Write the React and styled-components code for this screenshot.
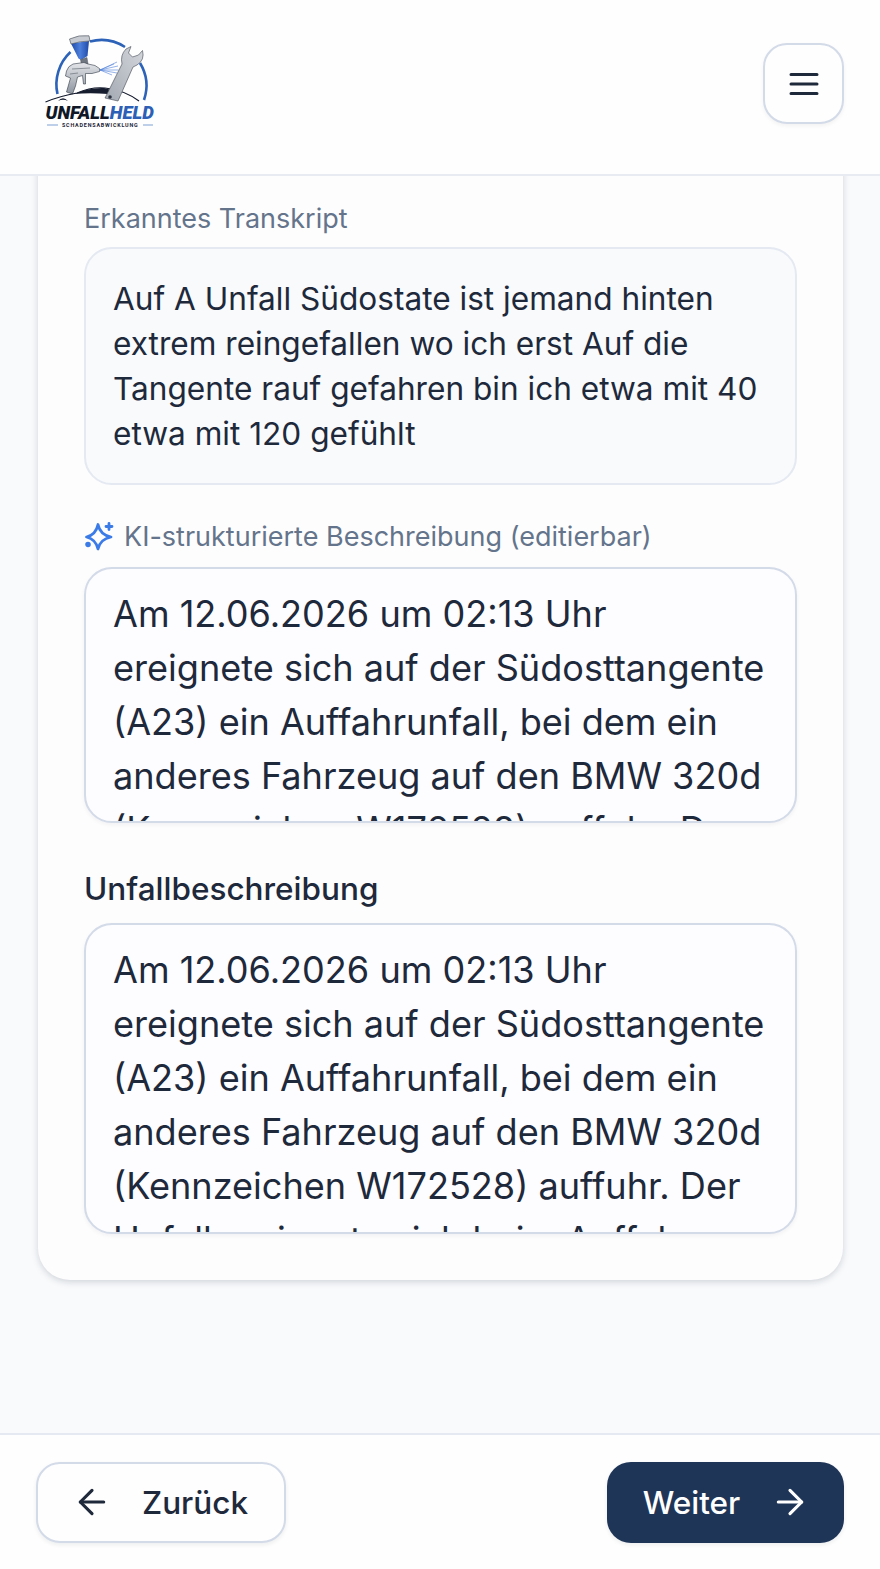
import React from 'react'
import styled, { createGlobalStyle } from 'styled-components'
import { ArrowLeft, ArrowRight } from 'lucide-react'

const GlobalStyle = createGlobalStyle`
  html, body {
    margin: 0;
    padding: 0;
    background: #f8fafc;
  }
  * {
    box-sizing: border-box;
  }
`;

const Page = styled.div`
  display: flex;
  flex-direction: column;
  height: 100vh;
  overflow: hidden;
  font-family: Inter, "Liberation Sans", sans-serif;
  color: #1e293b;
`;

const Header = styled.header`
  display: flex;
  flex: none;
  align-items: center;
  justify-content: space-between;
  height: 176px;
  padding: 0 36px 10px 40px;
  background: #fefefe;
  border-bottom: 2px solid #e8ebf2;
  z-index: 2;
`;

const LogoSvg = styled.svg`
  display: block;
  flex: none;
`;

const MenuButton = styled.button`
  display: flex;
  align-items: center;
  justify-content: center;
  width: 81px;
  height: 81px;
  margin-top: 3px;
  padding: 0;
  background: #fefefe;
  border: 2px solid #d3dae8;
  border-radius: 24px;
  box-shadow: 0 2px 4px rgba(15, 23, 42, 0.05);
`;

const Main = styled.main`
  display: flex;
  flex: 1;
  min-height: 0;
  flex-direction: column;
  justify-content: flex-end;
  padding: 0 37px 153px 38px;
`;

const Card = styled.section`
  flex: none;
  padding: 60px 46px 46px;
  background: #fdfdfe;
  border-radius: 32px;
  box-shadow: 0 2px 7px rgba(15, 23, 42, 0.17);
`;

const FieldLabel = styled.div`
  display: flex;
  align-items: center;
  gap: 10px;
  height: 34px;
  font-size: 27px;
  color: #64748b;
`;

const TranscriptBox = styled.div`
  margin-top: 12px;
  margin-bottom: 34px;
  padding: 27px 27px;
  font-size: 31.6px;
  line-height: 45px;
  background: #f8fafc;
  border: 2px solid #e5e9f1;
  border-radius: 28px;
`;

const SectionLabel = styled.label`
  display: block;
  margin-top: 46px;
  margin-bottom: 14px;
  font-size: 31.5px;
  line-height: 40px;
  font-weight: 500;
`;

const TextArea = styled.textarea`
  display: block;
  width: 100%;
  height: ${(p) => p.$height}px;
  margin-top: ${(p) => p.$top}px;
  padding: 18px 27px;
  font-family: inherit;
  font-size: 36.1px;
  line-height: 54px;
  color: #1e293b;
  background: #fdfdff;
  border: 2px solid #d3dae8;
  border-radius: 28px;
  box-shadow: 0 2px 4px rgba(15, 23, 42, 0.05);
  overflow: hidden;
  resize: none;
  outline: none;
`;

const Footer = styled.footer`
  display: flex;
  flex: none;
  align-items: center;
  justify-content: space-between;
  height: 136px;
  padding: 0 36px;
  background: #fefefe;
  border-top: 2px solid #e5e9f1;
`;

const NavButton = styled.button`
  display: flex;
  align-items: center;
  justify-content: center;
  gap: ${(p) => p.$gap}px;
  width: ${(p) => p.$width}px;
  height: 81px;
  padding: ${(p) => (p.$primary ? '0 0 0 2px' : '0 2px 0 0')};
  font-family: inherit;
  font-size: 31.5px;
  font-weight: 500;
  color: ${(p) => (p.$primary ? '#ffffff' : '#1e293b')};
  background: ${(p) => (p.$primary ? '#1f3558' : '#fefefe')};
  border: ${(p) => (p.$primary ? 'none' : '2px solid #d3dae8')};
  border-radius: 24px;
  box-shadow: 0 2px 4px rgba(15, 23, 42, 0.07);
`;

const MenuIcon = () => (
  <svg width="30" height="24" viewBox="0 0 30 24" fill="none" stroke="#1e293b" strokeWidth="3" strokeLinecap="round">
    <path d="M2 2.5h26M2 12h26M2 21.5h26" />
  </svg>
);

const SparkleIcon = () => (
  <svg width="30" height="30" viewBox="0 0 30 30" fill="none" stroke="#3b7be8" strokeWidth="2.8" strokeLinecap="round" strokeLinejoin="round">
    <path d="M14 3.5 C15.4 10.5 19 14.4 27 16 C19 17.6 15.4 21.5 14 28 C12.6 21.5 9 17.6 2.5 16 C9 14.4 12.6 10.5 14 3.5 Z" />
    <path d="M25 2.5v6M22 5.5h6" />
    <circle cx="4" cy="23.5" r="1.4" fill="#3b7be8" />
  </svg>
);

const Logo = () => (
  <LogoSvg width="120" height="104" viewBox="40 28 120 104">
    <defs>
      <linearGradient id="cup" x1="0" y1="0" x2="1" y2="0">
        <stop offset="0" stopColor="#1f4aa8" />
        <stop offset="0.5" stopColor="#4d7fdc" />
        <stop offset="1" stopColor="#1f4aa8" />
      </linearGradient>
      <linearGradient id="steel" x1="0" y1="0" x2="0" y2="1">
        <stop offset="0" stopColor="#e4e6ea" />
        <stop offset="1" stopColor="#8d949e" />
      </linearGradient>
      <linearGradient id="wrench" x1="1" y1="0" x2="0" y2="1">
        <stop offset="0" stopColor="#d4d7dc" />
        <stop offset="1" stopColor="#a3a9b2" />
      </linearGradient>
    </defs>
    <g fill="none" stroke="#2c62b8" strokeWidth="2.6">
      <path d="M57.5 92 A 44 44 0 0 1 70.5 50" />
      <path d="M90 39.5 A 44 44 0 0 1 125 45" />
      <path d="M140 61 A 44 44 0 0 1 144 98" />
    </g>
    <path d="M71 41.5 L89 39 L87.5 54 L81 58 L78.5 56.5 Z" fill="url(#cup)" />
    <path d="M69.5 37 Q79 32.5 89 33.8 L90 39 Q80 39 71 42 Z" fill="#c8ccd2" stroke="#3f4653" strokeWidth="0.6" />
    <path d="M80.5 57.5 L87 55.5 L88 62 L81.5 63.5 Z" fill="#6f767f" stroke="#3f4653" strokeWidth="0.4" />
    <path d="M73 62 L84 60.5 L88 62 L95 63.5 L99.5 66.5 L99.5 69.5 L92 71.5 L85.5 71.5 L85.5 82 L83.5 82 L82.5 73.5 L77.5 75 L75.5 84 L72.5 92 L66.5 90 L70.5 76 L65.5 74 L66.5 69 Q68 64 73 62 Z" fill="url(#steel)" stroke="#333a46" strokeWidth="0.6" strokeLinejoin="round" />
    <path d="M72 67 L90 66 M70 72 L78 71" stroke="#5a616c" strokeWidth="0.6" fill="none" />
    <g stroke="#4f7fda" strokeWidth="0.6">
      <path d="M100 68 L117 60M100 68 L118 64M100 68 L118.5 68M100 68 L117 71M100 68 L112 73M100 68 L114 62" />
    </g>
    <path d="M45.5 100 Q60 94 77 91 Q92 84.5 105 86 Q124 88 139 99" fill="none" stroke="#12192b" strokeWidth="1.1" />
    <path d="M74 92 Q88 85.5 104 86 L117 89.5 L108 92 Q90 90.5 74 92 Z" fill="#151c2e" />
    <path d="M58 99 Q63 93.5 68 99 Q63 96.5 58 99 Z" fill="#12192b" />
    <path d="M105 96 L122 62 Q120 53 126 47 L131 44.5 L128.5 51 L132.5 55 L138.5 53 L142.5 48.5 Q145 58 137 63 L133 65 L118 99 Z" fill="url(#wrench)" stroke="#3f4653" strokeWidth="0.6" strokeLinejoin="round" />
    <circle cx="110" cy="95" r="1.8" fill="#2b3340" />
    <text x="45.5" y="117" fontFamily="Roboto, sans-serif" fontSize="18.5" fontWeight="900" fontStyle="italic">
      <tspan fill="#101828">UNFALL</tspan>
      <tspan fill="#2c5fb5">HELD</tspan>
    </text>
    <path d="M47 123h11M143 123h10" stroke="#7f9fd6" strokeWidth="1.2" />
    <text x="62" y="125" fontFamily="Roboto, sans-serif" fontSize="5.4" fontWeight="700" letterSpacing="0.8" fill="#1c2536">SCHADENSABWICKLUNG</text>
  </LogoSvg>
);

const description =
  'Am 12.06.2026 um 02:13 Uhr ereignete sich auf der Südosttangente (A23) ein Auffahrunfall, bei dem ein anderes Fahrzeug auf den BMW 320d (Kennzeichen W172528) auffuhr. Der Unfall ereignete sich beim Auffahren auf die Tangente.';

const App = () => {
  return (
    <Page>
      <GlobalStyle />
      <Header>
        <Logo />
        <MenuButton aria-label="Menü">
          <MenuIcon />
        </MenuButton>
      </Header>
      <Main>
        <Card>
          <FieldLabel>Erkanntes Transkript</FieldLabel>
          <TranscriptBox>
            Auf A Unfall Südostate ist jemand hinten extrem reingefallen wo ich erst Auf die Tangente rauf gefahren bin ich etwa mit 40 etwa mit 120 gefühlt
          </TranscriptBox>
          <FieldLabel>
            <SparkleIcon />
            KI-strukturierte Beschreibung (editierbar)
          </FieldLabel>
          <TextArea $height={256} $top={14} readOnly value={description} />
          <SectionLabel>Unfallbeschreibung</SectionLabel>
          <TextArea $height={311} $top={0} readOnly value={description} />
        </Card>
      </Main>
      <Footer>
        <NavButton $width={250} $gap={30}>
          <ArrowLeft size={40} strokeWidth={1.9} />
          Zurück
        </NavButton>
        <NavButton $width={237} $gap={30} $primary>
          Weiter
          <ArrowRight size={40} strokeWidth={1.9} />
        </NavButton>
      </Footer>
    </Page>
  )
}

export default App;
